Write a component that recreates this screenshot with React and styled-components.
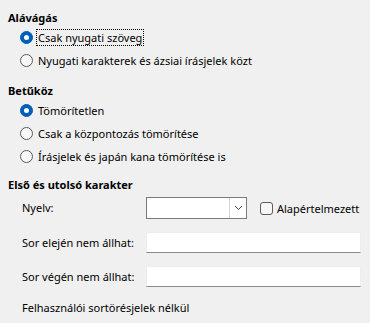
import React from "react";
import styled, { createGlobalStyle } from "styled-components";

const GlobalStyle = createGlobalStyle`
  html, body {
    margin: 0;
    padding: 0;
    background: #f0f0f0;
  }
  body {
    font-family: "Noto Sans", "Open Sans", sans-serif;
    font-size: 11px;
    color: #000;
  }
`;

const Page = styled.div`
  width: 370px;
  height: 323px;
  padding: 9px 0 0 8px;
  box-sizing: border-box;
  overflow: hidden;
`;

const Section = styled.div`
  display: flex;
  flex-direction: column;
  margin-bottom: ${(p) => p.$gap || 0}px;
`;

const Heading = styled.div`
  font-weight: bold;
  height: 17px;
  line-height: 17px;
`;

const RadioRow = styled.label`
  display: flex;
  align-items: center;
  height: 23px;
  padding-left: 12px;
`;

const RadioCircle = styled.span`
  width: 13px;
  height: 13px;
  border-radius: 50%;
  box-sizing: border-box;
  flex-shrink: 0;
  background: ${(p) => (p.$checked ? "#005fb8" : "#f7f7f7")};
  border: 1px solid ${(p) => (p.$checked ? "#005fb8" : "#5c5c5c")};
  display: flex;
  align-items: center;
  justify-content: center;
  &::after {
    content: "";
    display: ${(p) => (p.$checked ? "block" : "none")};
    width: 5px;
    height: 5px;
    border-radius: 50%;
    background: #fff;
  }
`;

const RadioText = styled.span`
  margin-left: 3px;
  padding: 0 1px;
  line-height: 15px;
  border: 1px dotted ${(p) => (p.$focused ? "#000" : "transparent")};
`;

const Grid = styled.div`
  display: grid;
  grid-template-columns: 124px 215px;
  align-items: center;
  margin-left: 14px;
  margin-top: 4px;
  row-gap: 13px;
`;

const Label = styled.span`
  line-height: 16px;
  white-space: nowrap;
`;

const ComboRow = styled.div`
  display: flex;
  align-items: center;
`;

const Combo = styled.div`
  width: 101px;
  height: 22px;
  box-sizing: border-box;
  border: 1px solid #7a7a7a;
  background: #fff;
  display: flex;
  justify-content: flex-end;
`;

const DropButton = styled.div`
  width: 16px;
  border-left: 1px solid #d4d4d4;
  display: flex;
  align-items: center;
  justify-content: center;
`;

const CheckLabel = styled.label`
  display: flex;
  align-items: center;
  margin-left: 13px;
`;

const CheckBox = styled.span`
  width: 13px;
  height: 13px;
  box-sizing: border-box;
  border: 1px solid #5c5c5c;
  border-radius: 3px;
  background: #f7f7f7;
  margin-right: 4px;
`;

const TextInput = styled.div`
  height: 21px;
  box-sizing: border-box;
  background: #fff;
  border: 1px solid #ececec;
  border-bottom-color: #8a8a8a;
`;

const Note = styled.div`
  margin: 13px 0 0 14px;
  line-height: 16px;
`;

function Radio({ checked, focused, children }) {
  return (
    <RadioRow>
      <RadioCircle $checked={checked} />
      <RadioText $focused={focused}>{children}</RadioText>
    </RadioRow>
  );
}

export default function App() {
  return (
    <>
      <GlobalStyle />
      <Page>
        <Section $gap={10}>
          <Heading>Alávágás</Heading>
          <Radio checked focused>
            Csak nyugati szöveg
          </Radio>
          <Radio>Nyugati karakterek és ázsiai írásjelek közt</Radio>
        </Section>
        <Section $gap={8}>
          <Heading>Betűköz</Heading>
          <Radio checked>Tömörítetlen</Radio>
          <Radio>Csak a központozás tömörítése</Radio>
          <Radio>Írásjelek és japán kana tömörítése is</Radio>
        </Section>
        <Section>
          <Heading>Első és utolsó karakter</Heading>
          <Grid>
            <Label>Nyelv:</Label>
            <ComboRow>
              <Combo>
                <DropButton>
                  <svg width="9" height="6" viewBox="0 0 9 6">
                    <path d="M1 1l3.5 3.5L8 1" fill="none" stroke="#444" strokeWidth="1" />
                  </svg>
                </DropButton>
              </Combo>
              <CheckLabel>
                <CheckBox />
                Alapértelmezett
              </CheckLabel>
            </ComboRow>
            <Label>Sor elején nem állhat:</Label>
            <TextInput />
            <Label>Sor végén nem állhat:</Label>
            <TextInput />
          </Grid>
          <Note>Felhasználói sortörésjelek nélkül</Note>
        </Section>
      </Page>
    </>
  );
}
